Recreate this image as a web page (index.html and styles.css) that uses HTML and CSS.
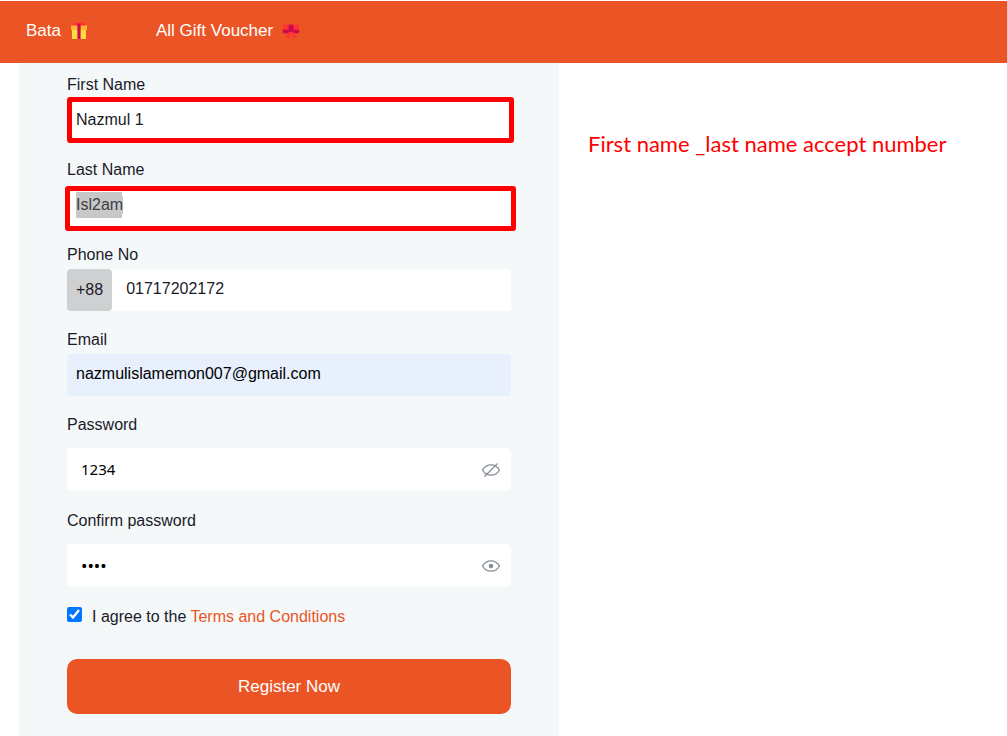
FILE: index.html
```html
<!DOCTYPE html>
<html lang="en">
<head>
<meta charset="utf-8">
<meta name="viewport" content="width=device-width, initial-scale=1">
<title>Register</title>
<link rel="stylesheet" href="styles.css">
</head>
<body>
<header class="topbar">
  <nav class="nav">
    <a class="nav-link" href="#bata">Bata
      <svg class="nav-icon" viewBox="0 0 18 18" aria-hidden="true">
        <path fill="#ff3430" d="M2.500 2Q3 .5 4.500.5h2.300Q9 1 9 4H2.200zM15.500 2Q15 .5 13.500.5H11.200Q9 1 9 4h6.800z"/>
        <path fill="#fdb62f" d="M1 3.500h16v4.500H1z"/>
        <path fill="#ffda44" d="M2 8h14v9H2z"/>
        <path fill="#cb0a50" d="M7.400 1.500h3.200V17H7.400z"/>
      </svg>
    </a>
    <a class="nav-link" href="#vouchers">All Gift Voucher
      <svg class="nav-icon" viewBox="0 0 18 18" aria-hidden="true">
        <path fill="#ff3430" d="M6.500 9 3 16l2.500-.7L7 17 9 11l2 6 1.500-1.700 2.500.7L11.500 9z"/>
        <path fill="#ff3430" d="M1.500 2.500H6L7 4v5l-6 1.500Q0 6 1.500 2.500zM16.500 2.500H12L11 4v5l6 1.500q1-4.500-.5-8z"/>
        <path fill="#cb0a50" d="M.7 8Q3 7 6.800 8v2.500Q3 12 1.500 11.200.6 10 .7 8zM17.300 8Q15 7 11.200 8v2.500q3.800 1.500 5.300.7.9-1.200.8-3.200zM6.800 2.500h4.400L11.700 9q-.5 1-2.700 1T6.300 9z"/>
      </svg>
    </a>
  </nav>
</header>
<main class="page">
  <form class="panel">
    <div class="field">
      <label for="first">First Name</label>
      <div class="control">
        <input class="input" id="first" type="text" value="Nazmul 1">
        <span class="mark mark-first"></span>
      </div>
    </div>
    <div class="field">
      <label for="last">Last Name</label>
      <div class="control">
        <input class="input input-selected" id="last" type="text" value="Isl2am">
        <span class="mark mark-last"></span>
      </div>
    </div>
    <div class="field">
      <label for="phone">Phone No</label>
      <div class="control control-phone">
        <span class="prefix">+88</span>
        <input class="input input-phone" id="phone" type="tel" value="01717202172">
      </div>
    </div>
    <div class="field">
      <label for="email">Email</label>
      <div class="control">
        <input class="input input-filled" id="email" type="email" value="nazmulislamemon007@gmail.com">
      </div>
    </div>
    <div class="field field-secret">
      <label for="password">Password</label>
      <div class="control secret">
        <input class="input" id="password" type="text" value="1234">
        <button class="eye" type="button" aria-label="Hide password">
          <svg viewBox="0 0 20 16" width="20" height="16" aria-hidden="true">
            <path d="M1.500 8Q4.500 2.800 10 2.800T18.500 8Q15.500 13.200 10 13.200T1.500 8zM3.500 14.500 16.500 1.500"/>
          </svg>
        </button>
      </div>
    </div>
    <div class="field field-secret">
      <label for="confirm">Confirm password</label>
      <div class="control secret">
        <input class="input input-dots" id="confirm" type="password" value="1234">
        <button class="eye" type="button" aria-label="Show password">
          <svg viewBox="0 0 20 16" width="20" height="16" aria-hidden="true">
            <path d="M1.500 8Q4.500 2.800 10 2.800T18.500 8Q15.500 13.200 10 13.200T1.500 8z"/>
            <circle cx="10" cy="8" r="2.300"/>
          </svg>
        </button>
      </div>
    </div>
    <div class="agree">
      <input class="check" id="agree" type="checkbox" checked>
      <label for="agree">I agree to the <a class="terms" href="#terms">Terms and Conditions</a></label>
    </div>
    <button class="submit" type="submit">Register Now</button>
  </form>
  <p class="note">First name _last name accept number</p>
</main>
<script src="script.js"></script>
</body>
</html>
```
FILE: styles.css
```css
* {
  box-sizing: border-box;
}

body {
  margin: 0;
  min-height: 100vh;
  display: flex;
  flex-direction: column;
  background: #fff;
  color: #1b1a29;
  font: 16px/24px "Liberation Sans", Arial, sans-serif;
}

.topbar {
  margin-top: 1px;
  padding: 18px 26px 20px;
  background: #eb5424;
}

.nav {
  display: flex;
  gap: 68px;
}

.nav-link {
  display: flex;
  align-items: center;
  gap: 9px;
  color: #fff;
  font-size: 17px;
  text-decoration: none;
}

.nav-icon {
  width: 18px;
  height: 18px;
}

.page {
  flex: 1;
  display: grid;
  grid-template-columns: minmax(0, 540fr) minmax(0, 448fr);
  margin-left: 19px;
}

.panel {
  padding: 10px 48px 22px;
  background: #f4f8f9;
}

.field {
  display: grid;
  gap: 2px;
  margin-bottom: 17px;
}

.control {
  position: relative;
  display: flex;
}

.input {
  flex: 1;
  min-width: 0;
  height: 42px;
  padding: 0 9px;
  border: 0;
  border-radius: 4px;
  outline: 0;
  background: #fff;
  color: inherit;
  font: inherit;
}

.input-selected {
  background: linear-gradient(#c8c8c8, #c8c8c8) 9px 8px / 46px 26px no-repeat #fff;
}

.input::selection {
  background: #c8c8c8;
  color: #3c3c46;
}

.mark {
  position: absolute;
  border: 5px solid #ff0000;
  border-radius: 3px;
  pointer-events: none;
}

.mark-first {
  inset: -2px -3px -2px 0;
}

.mark-last {
  inset: 2px -5px -5px -2px;
}

.control-phone {
  background: #fff;
  border-radius: 4px;
}

.prefix {
  padding: 9px;
  border-radius: 4px;
  background: #cfd0d2;
}

.input-phone {
  padding: 0 9px 2px 14px;
}

.input-filled {
  padding-bottom: 2px;
  background: #e8f0fe;
  color: #000;
}

.field-secret {
  gap: 11px;
  margin-bottom: 18px;
}

.secret {
  align-items: center;
  border-radius: 5px;
  background: #fff;
}

.secret .input {
  height: 43px;
  padding: 0 14px 2px;
  color: #000;
  font-family: "Noto Sans", sans-serif;
  font-size: 15px;
}

.secret .input-dots {
  padding-bottom: 0;
  font-size: 17px;
}

.eye {
  display: flex;
  margin-right: 10px;
  padding: 0;
  border: 0;
  background: none;
}

.eye path {
  fill: none;
  stroke: #858d97;
  stroke-width: 1.3;
}

.eye circle {
  fill: #858d97;
}

.agree {
  display: flex;
  align-items: flex-start;
  gap: 10px;
  margin-bottom: 30px;
}

.check {
  width: 15px;
  height: 15px;
  margin: 2px 0 0;
  accent-color: #0075ff;
}

.terms {
  color: #eb5424;
  text-decoration: none;
}

.submit {
  width: 100%;
  height: 55px;
  border: 0;
  border-radius: 10px;
  background: #eb5424;
  color: #fff;
  font: 17px/24px "Liberation Sans", Arial, sans-serif;
}

.note {
  margin: 67px 0 0 29px;
  color: #ff0000;
  font: 22px/28px Lato, Carlito, sans-serif;
}
```
FILE: script.js
```js
const lastName = document.getElementById("last");
lastName.focus();
lastName.select();
```
